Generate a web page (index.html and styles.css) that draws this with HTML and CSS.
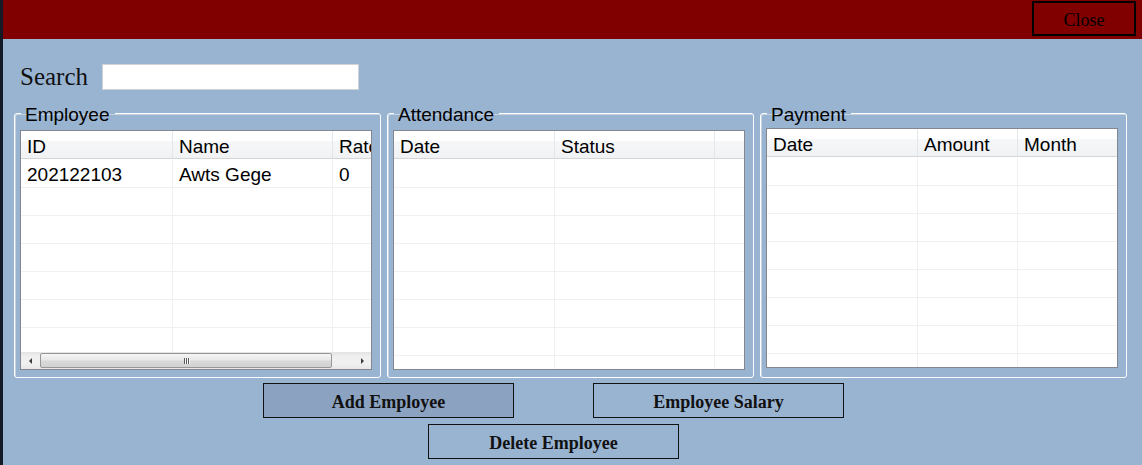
FILE: index.html
```html
<!DOCTYPE html>
<html>
<head>
<meta charset="utf-8">
<title>Employee</title>
<link rel="stylesheet" href="styles.css">
</head>
<body>
<div class="screen">
  <div class="edge"></div>
  <div class="window">
    <div class="titlebar">
      <button class="close">Close</button>
    </div>
    <div class="content">
      <div class="search-row">
        <label class="search-label">Search</label>
        <input class="search-input" type="text">
      </div>

      <div class="groups">
        <fieldset class="group">
          <legend>Employee</legend>
          <div class="list emp">
            <div class="head">
              <div class="cell c1">ID</div>
              <div class="cell c2">Name</div>
              <div class="cell c3">Rate</div>
            </div>
            <div class="rows">
              <div class="row"><div class="cell c1">202122103</div><div class="cell c2">Awts Gege</div><div class="cell c3">0</div></div>
              <div class="row"><div class="cell c1"></div><div class="cell c2"></div><div class="cell c3"></div></div>
              <div class="row"><div class="cell c1"></div><div class="cell c2"></div><div class="cell c3"></div></div>
              <div class="row"><div class="cell c1"></div><div class="cell c2"></div><div class="cell c3"></div></div>
              <div class="row"><div class="cell c1"></div><div class="cell c2"></div><div class="cell c3"></div></div>
              <div class="row"><div class="cell c1"></div><div class="cell c2"></div><div class="cell c3"></div></div>
              <div class="row"><div class="cell c1"></div><div class="cell c2"></div><div class="cell c3"></div></div>
              <div class="row"><div class="cell c1"></div><div class="cell c2"></div><div class="cell c3"></div></div>
            </div>
            <div class="hscroll">
              <div class="arrow-btn"><span class="arrow-left"></span></div>
              <div class="thumb"><span class="grip"><i></i><i></i><i></i></span></div>
              <div class="track"></div>
              <div class="arrow-btn right"><span class="arrow-right"></span></div>
            </div>
          </div>
        </fieldset>

        <fieldset class="group">
          <legend>Attendance</legend>
          <div class="list att">
            <div class="head">
              <div class="cell c1">Date</div>
              <div class="cell c2">Status</div>
              <div class="cell c3"></div>
            </div>
            <div class="rows">
              <div class="row"><div class="cell c1"></div><div class="cell c2"></div><div class="cell c3"></div></div>
              <div class="row"><div class="cell c1"></div><div class="cell c2"></div><div class="cell c3"></div></div>
              <div class="row"><div class="cell c1"></div><div class="cell c2"></div><div class="cell c3"></div></div>
              <div class="row"><div class="cell c1"></div><div class="cell c2"></div><div class="cell c3"></div></div>
              <div class="row"><div class="cell c1"></div><div class="cell c2"></div><div class="cell c3"></div></div>
              <div class="row"><div class="cell c1"></div><div class="cell c2"></div><div class="cell c3"></div></div>
              <div class="row"><div class="cell c1"></div><div class="cell c2"></div><div class="cell c3"></div></div>
              <div class="row"><div class="cell c1"></div><div class="cell c2"></div><div class="cell c3"></div></div>
              <div class="row"><div class="cell c1"></div><div class="cell c2"></div><div class="cell c3"></div></div>
            </div>
          </div>
        </fieldset>

        <fieldset class="group">
          <legend>Payment</legend>
          <div class="list pay">
            <div class="head">
              <div class="cell c1">Date</div>
              <div class="cell c2">Amount</div>
              <div class="cell c3">Month</div>
            </div>
            <div class="rows">
              <div class="row"><div class="cell c1"></div><div class="cell c2"></div><div class="cell c3"></div></div>
              <div class="row"><div class="cell c1"></div><div class="cell c2"></div><div class="cell c3"></div></div>
              <div class="row"><div class="cell c1"></div><div class="cell c2"></div><div class="cell c3"></div></div>
              <div class="row"><div class="cell c1"></div><div class="cell c2"></div><div class="cell c3"></div></div>
              <div class="row"><div class="cell c1"></div><div class="cell c2"></div><div class="cell c3"></div></div>
              <div class="row"><div class="cell c1"></div><div class="cell c2"></div><div class="cell c3"></div></div>
              <div class="row"><div class="cell c1"></div><div class="cell c2"></div><div class="cell c3"></div></div>
              <div class="row"><div class="cell c1"></div><div class="cell c2"></div><div class="cell c3"></div></div>
              <div class="row"><div class="cell c1"></div><div class="cell c2"></div><div class="cell c3"></div></div>
            </div>
          </div>
        </fieldset>
      </div>

      <div class="actions">
        <div class="actions-row">
          <button class="btn btn-active">Add Employee</button>
          <button class="btn">Employee Salary</button>
        </div>
        <button class="btn btn-center">Delete Employee</button>
      </div>
    </div>
  </div>
</div>
</body>
</html>
```

FILE: styles.css
```css
html, body {
  margin: 0;
  padding: 0;
  background: #99b4d1;
  font-family: "Liberation Sans", Arial, sans-serif;
}

.screen {
  display: flex;
  width: 1142px;
  height: 465px;
  overflow: hidden;
}

.edge {
  flex: none;
  width: 3px;
  background: #151b26;
}

.window {
  flex: 1;
  display: flex;
  flex-direction: column;
  background: #99b4d1;
}

.titlebar {
  flex: none;
  height: 39px;
  box-sizing: border-box;
  background: #800000;
  display: flex;
  justify-content: flex-end;
  align-items: flex-start;
  padding: 1px 6px 0 0;
}

.close {
  width: 104px;
  height: 35px;
  box-sizing: border-box;
  border: 2px solid #000;
  background: transparent;
  color: #000;
  font-family: "Liberation Serif", "Times New Roman", serif;
  font-size: 18px;
  padding: 4px 0 0 0;
  margin: 0;
}

.content {
  padding: 25px 0 0 11px;
}

.search-row {
  display: flex;
  align-items: center;
  gap: 14px;
  height: 26px;
  padding-left: 6px;
}

.search-label {
  font-family: "Liberation Serif", "Times New Roman", serif;
  font-size: 25px;
  color: #111;
}

.search-input {
  width: 257px;
  height: 26px;
  box-sizing: border-box;
  border: 1px solid #cfd3d8;
  background: #fff;
  margin: 0;
  padding: 0 4px;
}

.groups {
  display: flex;
  gap: 6px;
  margin-top: 11px;
}

.group {
  width: 367px;
  min-width: 0;
  box-sizing: border-box;
  margin: 0;
  padding: 0 0 7px 5px;
  border: 1px solid #fff;
  border-radius: 3px;
  box-shadow: inset 1px 1px 0 #c4d2e2;
}

.group legend {
  margin-left: 1px;
  padding: 4px 5px 0 4px;
  font-size: 19px;
  line-height: 20px;
  color: #000;
}

.list {
  width: 352px;
  height: 240px;
  box-sizing: border-box;
  margin-top: 5px;
  border: 1px solid #828790;
  background: #fff;
  display: flex;
  flex-direction: column;
  overflow: hidden;
}

.list.pay {
  margin-top: 3px;
}

.head {
  flex: none;
  display: flex;
  height: 28px;
  box-sizing: border-box;
  border-bottom: 1px solid #d5d5d5;
  background: linear-gradient(#ffffff 0%, #ffffff 36%, #f6f7f8 37%, #f1f2f4 100%);
}

.head .cell {
  border-right: 1px solid #e3e6ea;
  line-height: 31px;
}

.rows {
  flex: 1;
  min-height: 0;
  overflow: hidden;
  padding-top: 1px;
}

.row {
  display: flex;
  height: 28px;
  box-sizing: border-box;
  border-bottom: 1px solid #f0f0f0;
}

.cell {
  flex: none;
  box-sizing: border-box;
  height: 100%;
  padding-left: 6px;
  border-right: 1px solid #f0f0f0;
  font-size: 19px;
  line-height: 29px;
  color: #000;
  white-space: nowrap;
  overflow: hidden;
}

.cell.c3 {
  flex: 1;
  min-width: 0;
  border-right: none;
}

.emp .c1 { width: 152px; }
.emp .c2 { width: 160px; }

.att .c1 { width: 161px; }
.att .c2 { width: 160px; }

.pay .c1 { width: 151px; }
.pay .c2 { width: 100px; }

.hscroll {
  flex: none;
  height: 17px;
  display: flex;
  align-items: center;
  background: linear-gradient(#e3e3e3, #f0f0f0 30%, #f0f0f0 70%, #e6e6e6);
}

.arrow-btn {
  flex: none;
  width: 19px;
  height: 17px;
  display: flex;
  align-items: center;
  justify-content: center;
}

.arrow-btn.right {
  width: 17px;
}

.arrow-left {
  width: 0;
  height: 0;
  border-top: 3px solid transparent;
  border-bottom: 3px solid transparent;
  border-right: 3px solid #3c3c3c;
}

.arrow-right {
  width: 0;
  height: 0;
  border-top: 3px solid transparent;
  border-bottom: 3px solid transparent;
  border-left: 3px solid #3c3c3c;
}

.thumb {
  flex: none;
  width: 292px;
  height: 15px;
  box-sizing: border-box;
  border: 1px solid #979797;
  border-radius: 2px;
  background: linear-gradient(#f5f5f5, #e8e8e8 45%, #d9d9d9 55%, #d2d2d2);
  display: flex;
  align-items: center;
  justify-content: center;
}

.grip {
  display: flex;
  gap: 1px;
}

.grip i {
  display: block;
  width: 1px;
  height: 6px;
  background: #5a5a5a;
  box-shadow: 1px 0 0 #fafafa;
}

.track {
  flex: 1;
}

.actions {
  width: 581px;
  margin: 5px 0 0 249px;
  display: flex;
  flex-direction: column;
  gap: 6px;
}

.actions-row {
  display: flex;
  justify-content: space-between;
}

.btn {
  width: 251px;
  height: 35px;
  box-sizing: border-box;
  border: 1px solid #111;
  background: transparent;
  color: #111;
  font-family: "Liberation Serif", "Times New Roman", serif;
  font-weight: bold;
  font-size: 18px;
  padding: 3px 0 0 0;
  margin: 0;
}

.btn-active {
  background: #8ba3c0;
}

.btn-center {
  align-self: center;
}
```
